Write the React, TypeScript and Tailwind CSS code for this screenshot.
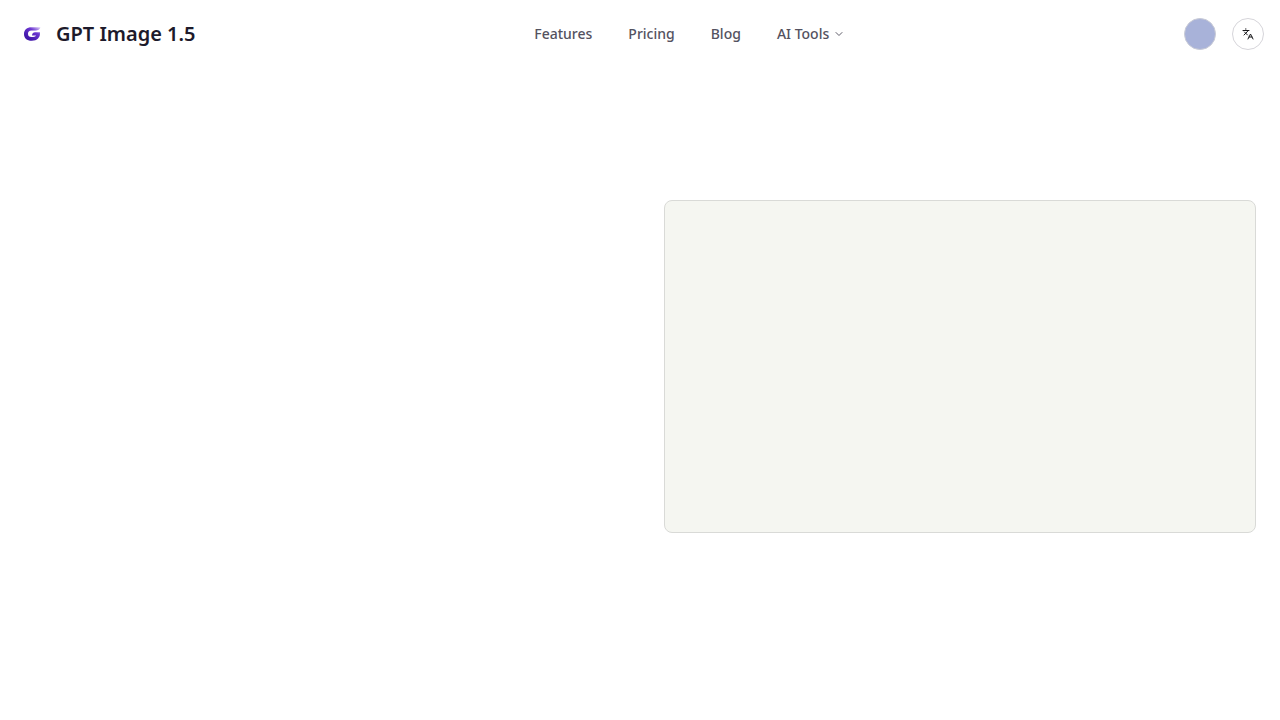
import { ChevronDown, Languages } from 'lucide-react';

const links = ['Features', 'Pricing', 'Blog'];

function Logo() {
  return (
    <svg viewBox="0 0 32 32" className="size-8" aria-hidden="true">
      <defs>
        <linearGradient id="logo" x1="14" y1="21" x2="23" y2="8" gradientUnits="userSpaceOnUse">
          <stop offset="0" stopColor="#4318ab" />
          <stop offset="0.55" stopColor="#6a35d0" />
          <stop offset="1" stopColor="#eadcfc" />
        </linearGradient>
      </defs>
      <path
        d="M24.5 9.2C23.8 11.4 22 12.4 19.5 12.4H15.5C13 12.4 12 13.8 12 15.8C12 18 13.2 19.1 15.5 19.1C17.8 19.1 19.6 18.9 20 17.5H16C16.2 15.2 17.4 14.3 19 14.3H24C24.4 19.8 21.2 22.8 15.8 22.8C10.8 22.8 8 20.3 8 16C8 11.7 11 9.2 15.5 9.2Z"
        fill="url(#logo)"
      />
    </svg>
  );
}

function Header() {
  return (
    <header className="flex items-center justify-between px-4 py-4">

      {/* LOGO */}
      <a href="#" className="flex items-center gap-2">
        <Logo />
        <span className="text-xl font-semibold text-[#1d1a2b]">GPT Image 1.5</span>
      </a>

      {/* MENU */}
      <nav className="flex h-9 items-center gap-1 text-sm font-medium text-[#545260]">
        {links.map(link => (
          <a key={link} href="#" className="px-4 py-2">
            {link}
          </a>
        ))}
        <button type="button" className="flex items-center gap-1 px-4 py-2">
          AI Tools
          <ChevronDown className="size-3 text-[#5f5d69]" />
        </button>
      </nav>

      {/* ACTIONS */}
      <div className="flex items-center gap-4">
        <button
          type="button"
          aria-label="Account"
          className="size-8 rounded-full border border-[#c9cbd6] bg-[#a8b2d9]"
        />
        <button
          type="button"
          aria-label="Change language"
          className="flex size-8 items-center justify-center rounded-full border border-[#d6d5da] text-[#18181b]"
        >
          <Languages className="size-3" />
        </button>
      </div>

    </header>
  );
}

export default function App() {
  return (
    <div className="min-h-screen bg-white font-['Noto_Sans',sans-serif]">
      <Header />

      <main className="grid grid-cols-2 gap-12 px-6 pt-33">
        <div />
        <div className="aspect-video rounded-lg border border-[#d9dad7] bg-[#f5f6f1]" />
      </main>
    </div>
  );
}
